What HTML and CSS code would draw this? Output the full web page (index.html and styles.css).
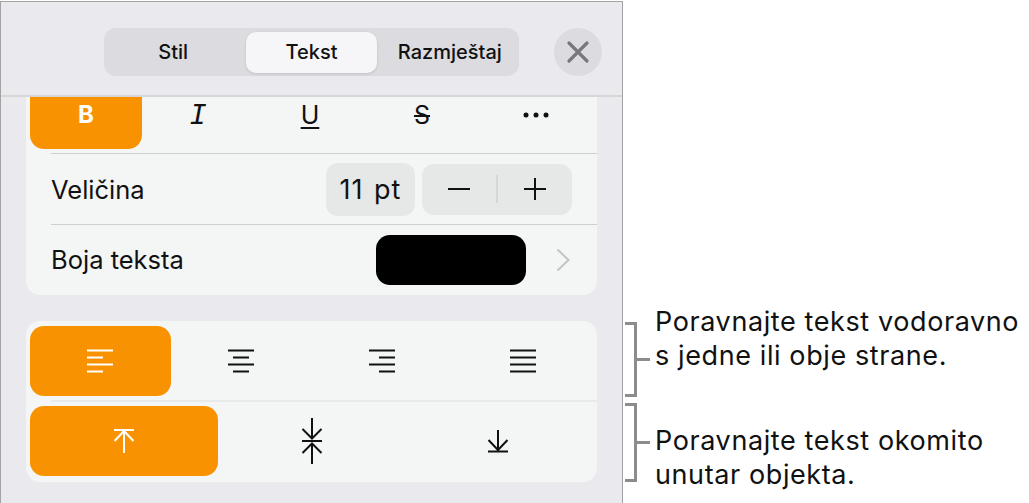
FILE: index.html
```html
<!DOCTYPE html>
<html lang="en">

<head>
    <meta charset="UTF-8">
    <meta name="viewport" content="width=device-width, initial-scale=1.0">
    <title>Tekst</title>
    <link rel="stylesheet" href="styles.css">
</head>

<body>
    <div class="page">
        <div class="panel">
            <div class="header">
                <div class="tabs">
                    <div class="tab">Stil</div>
                    <div class="tab active">Tekst</div>
                    <div class="tab">Razmještaj</div>
                </div>
                <div class="close">
                    <svg width="24" height="24" viewBox="0 0 24 24">
                        <path d="M3 3L21 21M21 3L3 21" stroke="#77777c" stroke-width="3.2" stroke-linecap="round" />
                    </svg>
                </div>
            </div>

            <div class="card card-top">
                <div class="styles">
                    <div class="cell on bold">B</div>
                    <div class="cell italic">I</div>
                    <div class="cell under">U</div>
                    <div class="cell strike">S</div>
                    <div class="cell">
                        <svg class="dots" width="26" height="6" viewBox="0 0 26 6">
                            <circle cx="3" cy="3" r="2.5" fill="#111" />
                            <circle cx="13" cy="3" r="2.5" fill="#111" />
                            <circle cx="23" cy="3" r="2.5" fill="#111" />
                        </svg>
                    </div>
                </div>
                <div class="row">
                    <span class="label">Veličina</span>
                    <div class="chip">11 pt</div>
                    <div class="stepper">
                        <svg width="24" height="24" viewBox="0 0 24 24">
                            <path d="M1 12H23" stroke="#111" stroke-width="2" />
                        </svg>
                        <span class="stepper-line"></span>
                        <svg width="24" height="24" viewBox="0 0 24 24">
                            <path d="M1 12H23M12 1V23" stroke="#111" stroke-width="2" />
                        </svg>
                    </div>
                </div>
                <div class="row">
                    <span class="label label-color">Boja teksta</span>
                    <div class="swatch"></div>
                    <svg class="chevron" width="14" height="24" viewBox="0 0 14 24">
                        <path d="M1.5 1.5L12.5 12L1.5 22.5" fill="none" stroke="#c4c4c6" stroke-width="2" />
                    </svg>
                </div>
            </div>

            <div class="card card-align">
                <div class="icons">
                    <div class="cell on">
                        <svg width="28" height="24" viewBox="0 0 28 24">
                            <path d="M1 1.5H27M1 8.5H17M1 15.5H27M1 22.5H17" stroke="#fff" stroke-width="1.9" />
                        </svg>
                    </div>
                    <div class="cell">
                        <svg width="28" height="24" viewBox="0 0 28 24">
                            <path d="M1 1.5H27M6 8.5H22M1 15.5H27M6 22.5H22" stroke="#111" stroke-width="1.9" />
                        </svg>
                    </div>
                    <div class="cell">
                        <svg width="28" height="24" viewBox="0 0 28 24">
                            <path d="M1 1.5H27M11 8.5H27M1 15.5H27M11 22.5H27" stroke="#111" stroke-width="1.9" />
                        </svg>
                    </div>
                    <div class="cell">
                        <svg width="28" height="24" viewBox="0 0 28 24">
                            <path d="M1 1.5H27M1 8.5H27M1 15.5H27M1 22.5H27" stroke="#111" stroke-width="1.9" />
                        </svg>
                    </div>
                </div>
                <div class="icons icons-v">
                    <div class="cell on">
                        <svg width="22" height="26" viewBox="0 0 22 26">
                            <path d="M1 2H21M11 3V25M1.5 13L11 3L20.5 13" fill="none" stroke="#fff" stroke-width="2" />
                        </svg>
                    </div>
                    <div class="cell">
                        <svg width="22" height="48" viewBox="0 0 22 48">
                            <path d="M1 24H21M11 1V22M1.5 12L11 21.5L20.5 12M11 26V47M1.5 36L11 26.5L20.5 36" fill="none" stroke="#111" stroke-width="2" />
                        </svg>
                    </div>
                    <div class="cell">
                        <svg class="down" width="22" height="24" viewBox="0 0 22 24">
                            <path d="M1 22.5H21M11 1V21M1.5 11L11 21L20.5 11" fill="none" stroke="#111" stroke-width="2" />
                        </svg>
                    </div>
                </div>
            </div>
        </div>

        <div class="notes">
            <div class="note note-one">
                <div class="bracket"></div>
                <div class="tick"></div>
                <p>Poravnajte tekst vodoravno<br>s jedne ili obje strane.</p>
            </div>
            <div class="note note-two">
                <div class="bracket"></div>
                <div class="tick"></div>
                <p>Poravnajte tekst okomito<br>unutar objekta.</p>
            </div>
        </div>
    </div>
</body>

</html>
```

FILE: styles.css
```css
* {
    box-sizing: border-box;
}

body {
    margin: 0;
    background-color: #fff;
    font-family: "Inter", "Liberation Sans", sans-serif;
    color: #111;
    overflow: hidden;
}

.page {
    display: flex;
    height: 503px;
    padding-top: 1px;
}

.panel {
    width: 623px;
    height: 502px;
    background-color: #e9e9ee;
    border: 1px solid #a3a3a3;
    border-bottom: 0;
}

.header {
    height: 95px;
    display: flex;
    align-items: flex-start;
    padding: 26px 0 0 103px;
    border-bottom: 2px solid #d6d6d9;
    border-radius: 14px 14px 0 0;
}

.tabs {
    width: 415px;
    height: 48px;
    display: flex;
    gap: 5px;
    padding: 4px 4px 3px;
    background-color: #dcdce0;
    border-radius: 12px;
}

.tab {
    flex: 1 1 0;
    display: flex;
    align-items: center;
    justify-content: center;
    font-size: 20px;
    font-weight: 450;
    white-space: nowrap;
    padding-bottom: 2px;
}

.tab:first-child {
    padding-right: 3px;
}

.tab:last-child {
    padding-left: 3px;
}

.tab.active {
    background-color: #f6f6f8;
    border-radius: 10px;
    box-shadow: 0 1px 3px rgba(0, 0, 0, 0.12);
}

.close {
    width: 48px;
    height: 48px;
    margin-left: 35px;
    display: flex;
    align-items: center;
    justify-content: center;
    background-color: #dcdce0;
    border-radius: 50%;
}

.card {
    width: 571px;
    margin-left: 25px;
    background-color: #f4f5f5;
    border-radius: 14px;
}

.card-top {
    height: 198px;
    border-radius: 0 0 14px 14px;
}

.card-align {
    height: 161px;
    margin-top: 26px;
    padding: 5px 4px 6px;
}

.styles {
    display: flex;
    height: 57px;
    padding: 0 7px 0 4px;
    position: relative;
}

.styles::after {
    content: "";
    position: absolute;
    left: 25px;
    right: 0;
    bottom: 0;
    height: 1px;
    background-color: #cfcfcf;
}

.cell {
    flex: 1;
    display: flex;
    align-items: center;
    justify-content: center;
}

.cell.on {
    background-color: #f99200;
    border-radius: 14px;
}

.styles .cell {
    height: 52px;
    padding-bottom: 17px;
    font-size: 25px;
}

.styles .cell.on {
    border-radius: 0 0 14px 14px;
    font-size: 24px;
}

.bold {
    color: #fff;
    font-weight: 700;
}

.styles .italic {
    font-family: "Liberation Mono", monospace;
    font-style: italic;
    font-size: 29px;
    padding-bottom: 14px;
}

.under {
    text-decoration: underline;
    text-underline-offset: 3px;
    text-decoration-thickness: 2px;
}

.strike {
    text-decoration: line-through;
    text-decoration-thickness: 1.5px;
}

.dots {
    margin-left: 4px;
}

.row {
    height: 71px;
    margin-left: 25px;
    padding-right: 25px;
    display: flex;
    align-items: center;
    border-bottom: 1px solid #cfcfcf;
}

.row:last-child {
    border-bottom: 0;
    height: 70px;
}

.label {
    flex: 1;
    font-size: 25.5px;
}

.label-color {
    padding-bottom: 2px;
}

.chip {
    width: 89px;
    height: 53px;
    display: flex;
    align-items: center;
    justify-content: center;
    margin-right: 7px;
    background-color: #e6e7e7;
    border-radius: 12px;
    font-size: 27px;
    letter-spacing: 1px;
    word-spacing: 2px;
    white-space: nowrap;
}

.stepper {
    width: 150px;
    height: 51px;
    display: flex;
    align-items: center;
    justify-content: space-between;
    padding: 0 25px;
    background-color: #e6e7e7;
    border-radius: 12px;
}

.stepper-line {
    width: 2px;
    height: 28px;
    background-color: #d6d6d6;
}

.swatch {
    width: 150px;
    height: 50px;
    background-color: #000;
    border-radius: 14px;
    margin-right: 30px;
}

.chevron {
    margin-right: 2px;
}

.icons {
    display: flex;
    height: 70px;
}

.icons-v {
    margin-top: 10px;
    position: relative;
}

.icons-v::before {
    content: "";
    position: absolute;
    top: -6px;
    left: 21px;
    right: -4px;
    height: 2px;
    background-color: #e8e9e9;
}

.down {
    margin-right: 2px;
}

.notes {
    display: flex;
    flex-direction: column;
    padding: 321px 0 0 2px;
}

.note {
    display: flex;
    align-items: center;
}

.note-one {
    height: 75px;
}

.note-two {
    height: 79px;
    margin-top: 6px;
}

.bracket {
    width: 12px;
    height: 100%;
    border: 3px solid #8c8c8c;
    border-left: 0;
}

.tick {
    width: 13px;
    height: 3px;
    background-color: #8c8c8c;
    margin-right: 5px;
}

.note p {
    margin: 0;
    font-size: 27px;
    letter-spacing: 0.6px;
    line-height: 34px;
    white-space: nowrap;
}

.note-one p {
    margin-bottom: 41px;
}

.note-two p {
    margin-top: 31px;
}
```
